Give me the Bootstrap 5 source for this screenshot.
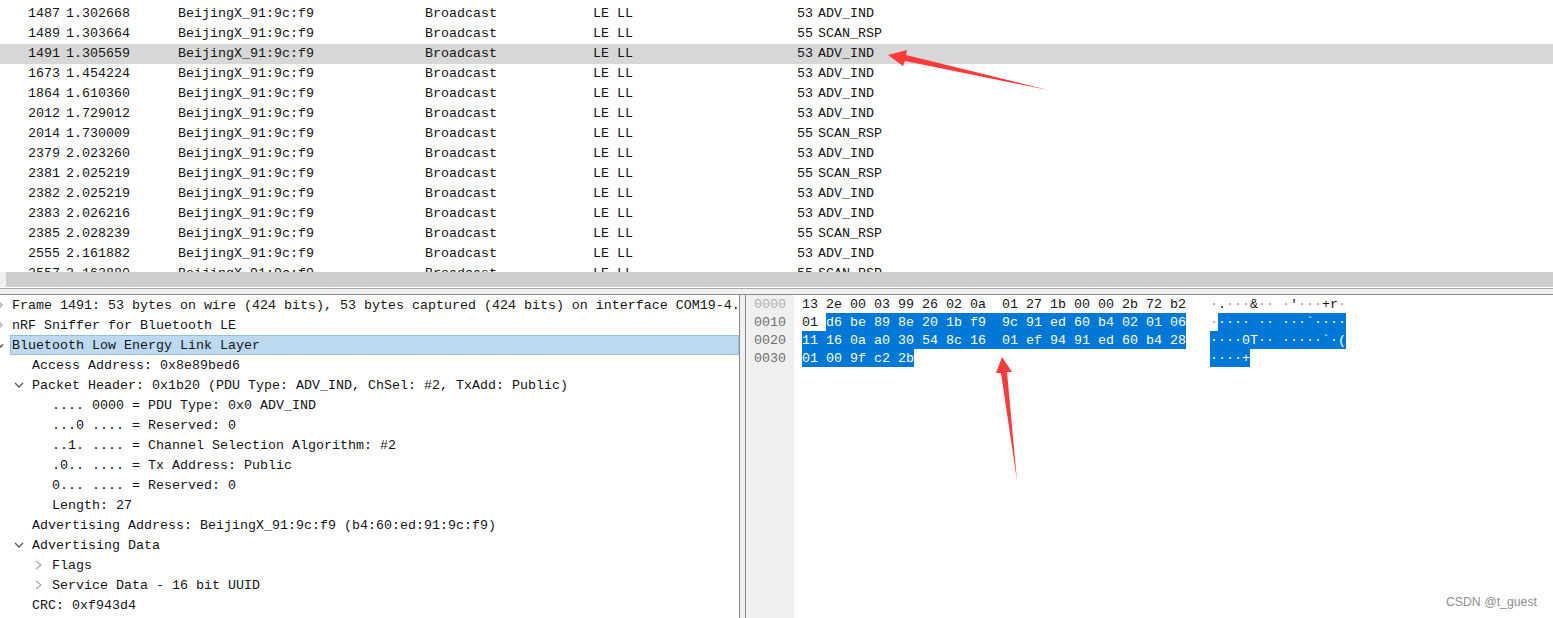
<!DOCTYPE html>
<html lang="en">
<head>
    <meta charset="UTF-8">
    <title>Wireshark capture</title>
    <link href="https://cdn.jsdelivr.net/npm/bootstrap@5.3.0/dist/css/bootstrap.min.css" rel="stylesheet">
    <style>
        html, body { height: 618px; overflow: hidden; }
        body {
            background: #fff;
            color: #141414;
            font-family: "Liberation Mono", "DejaVu Sans Mono", monospace;
            font-size: 13.33px;
        }
        .shot { height: 618px; }
        .pkt-list { height: 272px; flex: none; }
        .pkt-row {
            display: grid;
            grid-template-columns: 60px 118px 247px 168px 100px 120px 1fr;
            height: 20px;
            line-height: 20px;
            white-space: pre;
        }
        .pkt-row:first-child { margin-top: -16px; }
        .pkt-row .ps { padding-left: 6px; }
        .pkt-row .pi { padding-left: 5px; }
        .pkt-row.sel { background: #d7d7d7; }
        .hscroll { height: 15px; flex: none; background: #f0f0f0; padding-left: 6px; }
        .hscroll-thumb { height: 100%; background: #cdcdcd; }
        .split { height: 8px; flex: none; background: #f0f0f0; border-top: 1px solid #fff; border-bottom: 1px solid #8c8c90; }
        .split-line { height: 1px; background: #a8a8a8; }
        .panes { height: 323px; flex: none; }
        .tree { width: 740px; border-right: 1px solid #8c8c90; }
        .tree-row { height: 20px; white-space: pre; }
        .tree-row svg { flex: none; height: 20px; display: block; }
        .tree-label { flex: 1; border: 1px solid transparent; padding: 1px 0 0 1px; line-height: 18px; overflow: hidden; }
        .tree-row.sel .tree-label { background: #bcd9f0; border-color: #93bfe6; }
        .pane-gap { width: 5px; background: #f0f0f0; }
        .hex { border-left: 1px solid #8c8c90; }
        .hex-gutter { width: 48px; background: #f0f0f0; padding-left: 8px; color: #6e6e6e; }
        .hex-gutter div { height: 18px; line-height: 20px; }
        .hex-gutter .first { color: #b0b0b0; }
        .hex-body { padding-left: 8px; }
        .hex-line { height: 18px; line-height: 20px; white-space: pre; }
        .hex-ascii { margin-left: 24px; }
        .hex-tail { margin-left: 296px; }
        .hl { background: #0078d7; color: #fff; display: inline-block; height: 18px; }
        .hex-ascii i { font-style: normal; color: #9a9a9a; }
        .hex-ascii .hl i { color: #fff; }
        .arrows { top: 0; left: 0; pointer-events: none; }
        .wm { right: 16px; top: 594px; font-family: "Liberation Sans", Arial, sans-serif; font-size: 12.3px; color: #8f8f8f; line-height: 16px; }
    </style>
</head>
<body>
<div class="shot position-relative overflow-hidden d-flex flex-column">
    <div class="pkt-list overflow-hidden">
        <div class="pkt-row"><span class="text-end">1485</span><span class="ps">1.301671</span><span>BeijingX_91:9c:f9</span><span>Broadcast</span><span>LE LL</span><span class="text-end">53</span><span class="pi">ADV_IND</span></div>
        <div class="pkt-row"><span class="text-end">1487</span><span class="ps">1.302668</span><span>BeijingX_91:9c:f9</span><span>Broadcast</span><span>LE LL</span><span class="text-end">53</span><span class="pi">ADV_IND</span></div>
        <div class="pkt-row"><span class="text-end">1489</span><span class="ps">1.303664</span><span>BeijingX_91:9c:f9</span><span>Broadcast</span><span>LE LL</span><span class="text-end">55</span><span class="pi">SCAN_RSP</span></div>
        <div class="pkt-row sel"><span class="text-end">1491</span><span class="ps">1.305659</span><span>BeijingX_91:9c:f9</span><span>Broadcast</span><span>LE LL</span><span class="text-end">53</span><span class="pi">ADV_IND</span></div>
        <div class="pkt-row"><span class="text-end">1673</span><span class="ps">1.454224</span><span>BeijingX_91:9c:f9</span><span>Broadcast</span><span>LE LL</span><span class="text-end">53</span><span class="pi">ADV_IND</span></div>
        <div class="pkt-row"><span class="text-end">1864</span><span class="ps">1.610360</span><span>BeijingX_91:9c:f9</span><span>Broadcast</span><span>LE LL</span><span class="text-end">53</span><span class="pi">ADV_IND</span></div>
        <div class="pkt-row"><span class="text-end">2012</span><span class="ps">1.729012</span><span>BeijingX_91:9c:f9</span><span>Broadcast</span><span>LE LL</span><span class="text-end">53</span><span class="pi">ADV_IND</span></div>
        <div class="pkt-row"><span class="text-end">2014</span><span class="ps">1.730009</span><span>BeijingX_91:9c:f9</span><span>Broadcast</span><span>LE LL</span><span class="text-end">55</span><span class="pi">SCAN_RSP</span></div>
        <div class="pkt-row"><span class="text-end">2379</span><span class="ps">2.023260</span><span>BeijingX_91:9c:f9</span><span>Broadcast</span><span>LE LL</span><span class="text-end">53</span><span class="pi">ADV_IND</span></div>
        <div class="pkt-row"><span class="text-end">2381</span><span class="ps">2.025219</span><span>BeijingX_91:9c:f9</span><span>Broadcast</span><span>LE LL</span><span class="text-end">55</span><span class="pi">SCAN_RSP</span></div>
        <div class="pkt-row"><span class="text-end">2382</span><span class="ps">2.025219</span><span>BeijingX_91:9c:f9</span><span>Broadcast</span><span>LE LL</span><span class="text-end">53</span><span class="pi">ADV_IND</span></div>
        <div class="pkt-row"><span class="text-end">2383</span><span class="ps">2.026216</span><span>BeijingX_91:9c:f9</span><span>Broadcast</span><span>LE LL</span><span class="text-end">53</span><span class="pi">ADV_IND</span></div>
        <div class="pkt-row"><span class="text-end">2385</span><span class="ps">2.028239</span><span>BeijingX_91:9c:f9</span><span>Broadcast</span><span>LE LL</span><span class="text-end">55</span><span class="pi">SCAN_RSP</span></div>
        <div class="pkt-row"><span class="text-end">2555</span><span class="ps">2.161882</span><span>BeijingX_91:9c:f9</span><span>Broadcast</span><span>LE LL</span><span class="text-end">53</span><span class="pi">ADV_IND</span></div>
        <div class="pkt-row"><span class="text-end">2557</span><span class="ps">2.162880</span><span>BeijingX_91:9c:f9</span><span>Broadcast</span><span>LE LL</span><span class="text-end">55</span><span class="pi">SCAN_RSP</span></div>
    </div>
    <div class="hscroll"><div class="hscroll-thumb"></div></div>
    <div class="split"><div class="split-line"></div></div>
    <div class="panes d-flex">
        <div class="tree overflow-hidden">
            <div class="tree-row d-flex"><svg width="10" viewBox="0 0 10 20"><polyline points="-1,7 2,10 -1,13" fill="none" stroke="#aaa" stroke-width="1.3"/></svg><div class="tree-label">Frame 1491: 53 bytes on wire (424 bits), 53 bytes captured (424 bits) on interface COM19-4.</div></div>
            <div class="tree-row d-flex"><svg width="10" viewBox="0 0 10 20"><polyline points="-1,7 2,10 -1,13" fill="none" stroke="#aaa" stroke-width="1.3"/></svg><div class="tree-label">nRF Sniffer for Bluetooth LE</div></div>
            <div class="tree-row sel d-flex"><svg width="10" viewBox="0 0 10 20"><polyline points="-1,10 1,12 3,9" fill="none" stroke="#555" stroke-width="1.3"/></svg><div class="tree-label">Bluetooth Low Energy Link Layer</div></div>
            <div class="tree-row d-flex"><svg width="30" viewBox="0 0 30 20"></svg><div class="tree-label">Access Address: 0x8e89bed6</div></div>
            <div class="tree-row d-flex"><svg width="30" viewBox="0 0 30 20"><polyline points="15,8 19,12 23,8" fill="none" stroke="#555" stroke-width="1.3"/></svg><div class="tree-label">Packet Header: 0x1b20 (PDU Type: ADV_IND, ChSel: #2, TxAdd: Public)</div></div>
            <div class="tree-row d-flex"><svg width="50" viewBox="0 0 50 20"></svg><div class="tree-label">.... 0000 = PDU Type: 0x0 ADV_IND</div></div>
            <div class="tree-row d-flex"><svg width="50" viewBox="0 0 50 20"></svg><div class="tree-label">...0 .... = Reserved: 0</div></div>
            <div class="tree-row d-flex"><svg width="50" viewBox="0 0 50 20"></svg><div class="tree-label">..1. .... = Channel Selection Algorithm: #2</div></div>
            <div class="tree-row d-flex"><svg width="50" viewBox="0 0 50 20"></svg><div class="tree-label">.0.. .... = Tx Address: Public</div></div>
            <div class="tree-row d-flex"><svg width="50" viewBox="0 0 50 20"></svg><div class="tree-label">0... .... = Reserved: 0</div></div>
            <div class="tree-row d-flex"><svg width="50" viewBox="0 0 50 20"></svg><div class="tree-label">Length: 27</div></div>
            <div class="tree-row d-flex"><svg width="30" viewBox="0 0 30 20"></svg><div class="tree-label">Advertising Address: BeijingX_91:9c:f9 (b4:60:ed:91:9c:f9)</div></div>
            <div class="tree-row d-flex"><svg width="30" viewBox="0 0 30 20"><polyline points="15,8 19,12 23,8" fill="none" stroke="#555" stroke-width="1.3"/></svg><div class="tree-label">Advertising Data</div></div>
            <div class="tree-row d-flex"><svg width="50" viewBox="0 0 50 20"><polyline points="36,6 41,10 36,14" fill="none" stroke="#aaa" stroke-width="1.3"/></svg><div class="tree-label">Flags</div></div>
            <div class="tree-row d-flex"><svg width="50" viewBox="0 0 50 20"><polyline points="36,6 41,10 36,14" fill="none" stroke="#aaa" stroke-width="1.3"/></svg><div class="tree-label">Service Data - 16 bit UUID</div></div>
            <div class="tree-row d-flex"><svg width="30" viewBox="0 0 30 20"></svg><div class="tree-label">CRC: 0xf943d4</div></div>
        </div>
        <div class="pane-gap"></div>
        <div class="hex flex-grow-1 d-flex">
            <div class="hex-gutter"><div class="first">0000</div><div>0010</div><div>0020</div><div>0030</div></div>
            <div class="hex-body">
                <div class="hex-line">13 2e 00 03 99 26 02 0a  01 27 1b 00 00 2b 72 b2<span class="hex-ascii"><i>·</i>.<i>···</i>&amp;<i>··</i> <i>·</i>'<i>···</i>+r<i>·</i></span></div>
                <div class="hex-line">01 <span class="hl">d6 be 89 8e 20 1b f9  9c 91 ed 60 b4 02 01 06</span><span class="hex-ascii"><i>·</i><span class="hl"><i>····</i> <i>··</i> <i>···</i>`<i>····</i></span></span></div>
                <div class="hex-line"><span class="hl">11 16 0a a0 30 54 8c 16  01 ef 94 91 ed 60 b4 28</span><span class="hex-ascii"><span class="hl"><i>····</i>0T<i>··</i> <i>·····</i>`<i>·</i>(</span></span></div>
                <div class="hex-line"><span class="hl">01 00 9f c2 2b</span><span class="hex-ascii hex-tail"><span class="hl"><i>····</i>+</span></span></div>
            </div>
        </div>
    </div>
    <svg class="arrows position-absolute" width="1553" height="618" viewBox="0 0 1553 618">
        <polygon points="888,55 907,50 906,55 1048,90 905,61 903,66" fill="#fb3a3a"/>
        <polygon points="1002,357 1012,372 1007,372 1017,481 1001,373 996,373" fill="#fb3a3a"/>
    </svg>
    <div class="wm position-absolute">CSDN @t_guest</div>
</div>
<script src="https://cdn.jsdelivr.net/npm/bootstrap@5.3.0/dist/js/bootstrap.bundle.min.js"></script>
</body>
</html>
